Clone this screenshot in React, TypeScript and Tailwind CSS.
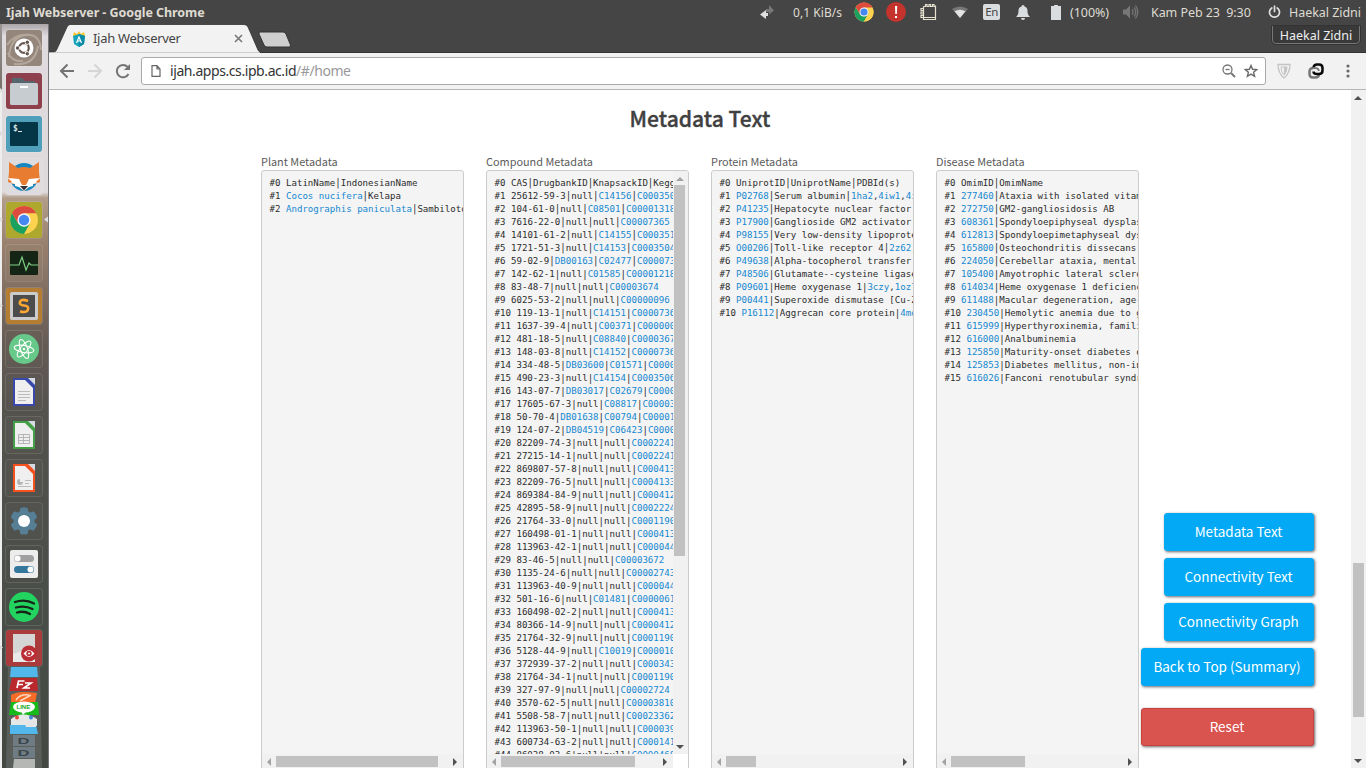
import React from "react";

const PLANTS = [
  "LatinName|IndonesianName",
  "{Cocos nucifera}|Kelapa",
  "{Andrographis paniculata}|Sambiloto",
];

const COMPOUNDS = [
  "CAS|DrugbankID|KnapsackID|KeggID",
  "25612-59-3|null|{C14156}|{C00035027}",
  "104-61-0|null|{C08501}|{C00001318}",
  "7616-22-0|null|null|{C00007365}",
  "14101-61-2|null|{C14155}|{C00035133}",
  "1721-51-3|null|{C14153}|{C00035042}",
  "59-02-9|{DB00163}|{C02477}|{C00007366}",
  "142-62-1|null|{C01585}|{C00001218}",
  "83-48-7|null|null|{C00003674}",
  "6025-53-2|null|null|{C00000096}",
  "119-13-1|null|{C14151}|{C00007364}",
  "1637-39-4|null|{C00371}|{C00000093}",
  "481-18-5|null|{C08840}|{C00003675}",
  "148-03-8|null|{C14152}|{C00007362}",
  "334-48-5|{DB03600}|{C01571}|{C00001213}",
  "490-23-3|null|{C14154}|{C00035065}",
  "143-07-7|{DB03017}|{C02679}|{C00001221}",
  "17605-67-3|null|{C08817}|{C00003658}",
  "50-70-4|{DB01638}|{C00794}|{C00001172}",
  "124-07-2|{DB04519}|{C06423}|{C00001231}",
  "82209-74-3|null|null|{C00022413}",
  "27215-14-1|null|null|{C00022415}",
  "869807-57-8|null|null|{C00041333}",
  "82209-76-5|null|null|{C00041334}",
  "869384-84-9|null|null|{C00041255}",
  "42895-58-9|null|null|{C00022242}",
  "21764-33-0|null|null|{C00011902}",
  "160498-01-1|null|null|{C00041335}",
  "113963-42-1|null|null|{C00004412}",
  "83-46-5|null|null|{C00003672}",
  "1135-24-6|null|null|{C00002743}",
  "113963-40-9|null|null|{C00004413}",
  "501-16-6|null|{C01481}|{C00000615}",
  "160498-02-2|null|null|{C00041336}",
  "80366-14-9|null|null|{C00004123}",
  "21764-32-9|null|null|{C00011903}",
  "5128-44-9|null|{C10019}|{C00001022}",
  "372939-37-2|null|null|{C00034355}",
  "21764-34-1|null|null|{C00011904}",
  "327-97-9|null|null|{C00002724}",
  "3570-62-5|null|null|{C00003810}",
  "5508-58-7|null|null|{C00023362}",
  "113963-50-1|null|null|{C00003911}",
  "600734-63-2|null|null|{C00014131}",
  "86038-03-6|null|null|{C00004682}",
];

const PROTEINS = [
  "UniprotID|UniprotName|PDBId(s)",
  "{P02768}|Serum albumin|{1ha2},{4iw1},{4iw2}",
  "{P41235}|Hepatocyte nuclear factor 4",
  "{P17900}|Ganglioside GM2 activator|",
  "{P98155}|Very low-density lipoprotein",
  "{O00206}|Toll-like receptor 4|{2z62},{2z63}",
  "{P49638}|Alpha-tocopherol transfer protein",
  "{P48506}|Glutamate--cysteine ligase",
  "{P09601}|Heme oxygenase 1|{3czy},{1ozl}",
  "{P00441}|Superoxide dismutase [Cu-Zn]",
  "{P16112}|Aggrecan core protein|{4md4}",
];

const DISEASES = [
  "OmimID|OmimName",
  "{277460}|Ataxia with isolated vitamin E",
  "{272750}|GM2-gangliosidosis AB",
  "{608361}|Spondyloepiphyseal dysplasia",
  "{612813}|Spondyloepimetaphyseal dysplasia",
  "{165800}|Osteochondritis dissecans",
  "{224050}|Cerebellar ataxia, mental",
  "{105400}|Amyotrophic lateral sclerosis",
  "{614034}|Heme oxygenase 1 deficiency",
  "{611488}|Macular degeneration, age-",
  "{230450}|Hemolytic anemia due to gamma",
  "{615999}|Hyperthyroxinemia, familial",
  "{616000}|Analbuminemia",
  "{125850}|Maturity-onset diabetes of",
  "{125853}|Diabetes mellitus, non-insulin",
  "{616026}|Fanconi renotubular syndrome",
];

function Row({ index, text }: { index: number; text: string }) {
  return (
    <div className="h-[13px]">
      #{index}{" "}
      {text.split(/(\{[^}]*\}|\|)/).map((part, i) =>
        part.startsWith("{") ? (
          <a key={i} className="text-[#1488d0]">
            {part.slice(1, -1)}
          </a>
        ) : part === "|" ? (
          <span key={i} className="inline-block scale-y-[1.2]">|</span>
        ) : (
          part
        )
      )}
    </div>
  );
}

function Arrow({ dir, className }: { dir: "up" | "down" | "left" | "right"; className: string }) {
  const d = {
    up: "M0 5L4 1L8 5Z",
    down: "M0 2L4 6L8 2Z",
    left: "M6 0L2 4L6 8Z",
    right: "M2 0L6 4L2 8Z",
  }[dir];
  return (
    <svg viewBox="0 0 8 8" className={"h-2 w-2 shrink-0 " + className}>
      <path d={d} fill="currentColor" />
    </svg>
  );
}

function Panel({
  title,
  rows,
  thumb,
  scrollY = false,
}: {
  title: string;
  rows: string[];
  thumb: string;
  scrollY?: boolean;
}) {
  return (
    <section className="flex w-[203px] shrink-0 flex-col">
      <h2 className="h-[17px] whitespace-nowrap font-['Noto_Sans_CJK_SC',sans-serif] text-[10.9px] leading-[16px] text-[#5c5c5c]">
        {title}
      </h2>
      <div className="flex h-[620px] flex-col overflow-hidden rounded-[3px] border border-[#ccc] bg-[#f4f4f4]">
        <div className="flex h-[583px] shrink-0">
          <pre className="min-w-0 flex-1 overflow-hidden pl-[7.5px] pt-[6px] font-['DejaVu_Sans_Mono',monospace] text-[9.1px] leading-[13px] text-[#2c2c2c]">
            {rows.map((r, i) => (
              <Row key={i} index={i} text={r} />
            ))}
          </pre>
          {scrollY && (
            <div className="flex w-[15px] shrink-0 flex-col items-center bg-[#f1f1f1] pr-[2px]">
              <Arrow dir="up" className="mt-[5px] text-[#a3a3a3]" />
              <div className="mt-px h-[371px] w-[11px] bg-[#c1c1c1]" />
              <div className="flex-1" />
              <Arrow dir="down" className="mb-[3px] text-[#505050]" />
            </div>
          )}
        </div>
        <div className="flex">
          <div className="flex h-[15px] flex-1 items-center bg-[#f1f1f1] pl-[3px] pr-[4px]">
            <Arrow dir="left" className="text-[#a3a3a3]" />
            <div className={"ml-[3px] h-[11px] bg-[#c1c1c1] " + thumb} />
            <div className="flex-1" />
            <Arrow dir="right" className="text-[#505050]" />
          </div>
          {scrollY && <div className="w-[15px] bg-white" />}
        </div>
      </div>
    </section>
  );
}

function ChromeLogo({ className }: { className: string }) {
  return (
    <svg viewBox="0 0 48 48" className={className}>
      <circle cx="24" cy="24" r="23" fill="#fdd24f" />
      <path d="M4.1 12.5A23 23 0 0 0 24 47L34 29L24 34.5L14.5 29.5Z" fill="#1aa15f" />
      <path d="M24 13H44.2A23 23 0 0 1 24 47L34 29Z" fill="#fdd24f" />
      <path d="M4.1 12.5A23 23 0 0 1 44.2 13H24L14 29Z" fill="#dd4b3e" />
      <circle cx="24" cy="24" r="11" fill="#f4f4f4" />
      <circle cx="24" cy="24" r="8.6" fill="#4688f1" />
    </svg>
  );
}

function TopBar() {
  return (
    <header className="flex h-6 shrink-0 items-center whitespace-nowrap bg-[#454545] pl-[6px] font-['Noto_Sans',sans-serif] text-[12.5px] text-[#dfdbd2]">
      <div className="w-[753px] pt-[2px] text-[12.5px] font-bold">
        <span className="tracking-[-0.07px]">Ijah Webserver - Google Chrome</span>
      </div>
      <div className="w-[34px]">
        <svg viewBox="0 0 16 16" className="h-4 w-4">
          <path d="M7 5h3V1l5 5.500-5 4V8H7Z" fill="#777" />
          <path d="M9 9H7V6L1 10.500 7 15v-3h2Z" fill="#dfdfdf" />
        </svg>
      </div>
      <div className="w-[61px] pt-[2px]"><span className="tracking-[0.05px] text-[12px]">0,1 KiB/s</span></div>
      <div className="w-[32px]"><ChromeLogo className="h-5 w-5" /></div>
      <div className="w-[34px]">
        <svg viewBox="0 0 20 20" className="h-5 w-5">
          <circle cx="10" cy="10" r="10" fill="#c4342c" />
          <path d="M9 4h2.200l-.3 8H9.300ZM9 14h2v2H9Z" fill="#fff" />
        </svg>
      </div>
      <div className="w-[32px]">
        <svg viewBox="0 0 17 18" className="h-[18px] w-[17px]" fill="none" stroke="#e6e2cf" strokeWidth="1.200">
          <path d="M3.500 3.500V16.500H15.500V2.500M3.500 14.500h12M3.500 3.500h2V1.500h1.500v2h2V1.500h1.500v2h2V1.500h1.500v2h1M3.500 5.500H1v2h2.500M3.500 9H1v2h2.500M3.500 12.500H1v2h2.500" />
        </svg>
      </div>
      <div className="w-[31px]">
        <svg viewBox="0 0 16 14" className="h-[14px] w-4">
          <path d="M0 4Q8-1 16 4L8 13Z" fill="#777" />
          <path d="M2.500 6.300Q8 3 13.500 6.300L8 13Z" fill="#e3e3e3" />
        </svg>
      </div>
      <div className="flex w-[33px]">
        <span className="flex h-4 w-[17px] items-center justify-center rounded-[2px] bg-[#d9dde0] text-[11.5px] leading-none tracking-[-0.4px] text-[#454545]">En</span>
      </div>
      <div className="w-[35px]">
        <svg viewBox="0 0 14 15" className="h-[15px] w-[14px]" fill="#d9dde0">
          <path d="M7 0a1.500 1.500 0 0 1 1.500 1.500C11 2.200 11.500 4 11.500 6c0 3 .8 4.500 2.500 6H0c1.700-1.500 2.500-3 2.500-6 0-2 .5-3.800 3-4.500A1.500 1.500 0 0 1 7 0ZM5 13h4a2 2 0 0 1-4 0Z" />
        </svg>
      </div>
      <div className="w-[19px]">
        <svg viewBox="0 0 10 15" className="h-[15px] w-[10px]" fill="#d9dde0"><path d="M3 0h4v1h3v14H0V1h3Z" /></svg>
      </div>
      <div className="w-[53px] pt-[2px]"><span className="tracking-[-0.05px]">(100%)</span></div>
      <div className="w-[28px]">
        <svg viewBox="0 0 16 16" className="h-4 w-4" fill="none" stroke="#777" strokeWidth="1.300">
          <path d="M0 5.500h3l4-4v13l-4-4H0Z" fill="#777" stroke="none" />
          <path d="M9 5.500q2 2.500 0 5M11 3.500q3.500 4.500 0 9M12.500 1.500q4.500 6.500 0 13" />
        </svg>
      </div>
      <div className="w-[117px] whitespace-pre pt-[2px]"><span className="tracking-[-0.07px]">Kam Peb 23  9:30</span></div>
      <div className="w-[21px]">
        <svg viewBox="0 0 13 14" className="h-[14px] w-[13px]" fill="none" stroke="#dfdfdf" strokeWidth="1.700" strokeLinecap="round">
          <path d="M6.500 1v5.500M3.800 3A5 5 0 1 0 9.200 3" />
        </svg>
      </div>
      <div className="pt-[2px]"><span className="tracking-[-0.05px]">Haekal Zidni</span></div>
    </header>
  );
}

function BrowserChrome() {
  return (
    <div className="shrink-0 font-['Noto_Sans',sans-serif]">
      <div className="flex h-[29px] border-b border-[#353535] bg-[#454545]">
        <div className="relative h-[29px] w-[211px] shrink-0">
          <svg viewBox="0 0 211 29" className="absolute inset-0 h-[29px] w-[211px]">
            <path d="M0 29V28H5Q7 28 8 25L18 3Q19 .5 21 .5H195Q198 .5 199 3L209 26Q210 28 211 28V29Z" fill="#f2f2f2" stroke="#333" strokeWidth=".8" />
            <path d="M5 28.500H211V29.500H0V28.500Z" fill="#f2f2f2" />
          </svg>
          <div className="relative flex h-full items-center pl-[23px] pr-[17px]">
            <svg viewBox="0 0 14 16" className="h-4 w-[14px]">
              <path d="M1 5L2 1l3 2 2-3 2 3 3-2 1 4Z" fill="#fbc52d" />
              <path d="M1 5l6-2 6 2-1 8-5 3-5-3Z" fill="#14a5bd" />
              <path d="M7 3l6 2-1 8-5 3Z" fill="#0b8ba5" />
              <path d="M4.500 12L7 6l2.500 6M5.500 10h3" stroke="#fff" fill="none" strokeWidth="1.200" />
            </svg>
            <span className="ml-[7px] text-[13px] tracking-[-0.3px] text-[#444]">Ijah Webserver</span>
            <svg viewBox="0 0 9 9" className="ml-auto h-[9px] w-[9px]"><path d="M1 1l7 7M8 1L1 8" stroke="#777" strokeWidth="1.600" /></svg>
          </div>
        </div>
        <svg viewBox="0 0 34 17" className="-ml-[2px] mt-[7px] h-[17px] w-[34px]">
          <path d="M2 1H25Q27 1 28 3L32.500 14Q33 16 31 16H9Q7 16 6 14L1 3Q.5 1 2 1Z" fill="#cfcfcf" stroke="#333" strokeWidth="1" />
        </svg>
        <div className="ml-auto mr-[6px] mt-[2px] flex h-[18px] w-[88px] items-center justify-center whitespace-nowrap rounded-b-[4px] border border-t-0 border-[#777] bg-[#393939] pt-[3px] text-[12.5px] tracking-[0px] text-[#eee] outline outline-1 outline-[#333]">
          Haekal Zidni
        </div>
      </div>
      <div className="flex h-[37px] items-center border-b border-[#b6b6b6] bg-[#f2f2f2]">
        <svg viewBox="0 0 16 16" className="ml-[10px] h-4 w-4" fill="none" stroke="#737373" strokeWidth="2"><path d="M15 8H2M8.500 1.500L2 8l6.500 6.500" /></svg>
        <svg viewBox="0 0 16 16" className="ml-[12px] h-4 w-4" fill="none" stroke="#d5d5d5" strokeWidth="2"><path d="M1 8h13M7.500 1.500L14 8l-6.500 6.500" /></svg>
        <svg viewBox="0 0 16 16" className="ml-[12px] h-4 w-4" fill="none" stroke="#737373" strokeWidth="2"><path d="M13.500 11A6.200 6.200 0 1 1 12.500 3.800" /><path d="M15 1v6H9Z" fill="#737373" stroke="none" /></svg>
        <div className="ml-[10px] flex h-[28px] w-[1125px] shrink-0 items-center rounded-[3px] border border-[#a9a9a9] bg-white px-[9px]">
          <svg viewBox="0 0 10 12" className="h-3 w-[10px]" fill="none" stroke="#666" strokeWidth="1.200"><path d="M1 .7H6L9 4v7.300H1ZM6 .7V4h3" /></svg>
          <span className="ml-[9px] pb-px text-[14px] tracking-[-0.42px] text-[#333]">ijah.apps.cs.ipb.ac.id<span className="tracking-[-0.45px] text-[#999]">/#/home</span></span>
          <svg viewBox="0 0 14 14" className="ml-auto h-[14px] w-[14px]" fill="none" stroke="#757575" strokeWidth="1.300"><circle cx="5.500" cy="5.500" r="4.500" /><path d="M3.500 5.500h4" /><path d="M9 9l4 4" strokeWidth="2" /></svg>
          <svg viewBox="0 0 14 14" className="ml-[8px] mr-[-2px] h-[14px] w-[14px]" fill="none" stroke="#6a6a6a" strokeWidth="1.400"><path d="M7 1.500l1.600 3.800 4.100.3-3.100 2.700 1 4L7 10.100l-3.600 2.200 1-4L1.300 5.600l4.100-.3Z" /></svg>
        </div>
        <svg viewBox="0 0 14 16" className="ml-[11px] h-4 w-[14px]" fill="none" stroke="#c4c4c4"><path d="M1 1.500h12Q13 10 7 15Q1 10 1 1.500Z" strokeWidth="1.300" /><path d="M4 4h6Q10 9 7 12Q4 9 4 4Z" strokeWidth="1" /><path d="M7 4h3Q10 9 7 12Z" fill="#c4c4c4" stroke="none" /></svg>
        <svg viewBox="0 0 16 16" className="ml-[17px] h-4 w-4" fill="none" strokeWidth="2.500">
          <path d="M5.500 5Q1.500 5 1.500 8.500V11Q1.500 14.500 5 14.500H7.500Q11 14.500 11 11" stroke="#777" />
          <path d="M5.500 4.500Q6 1.500 9 1.500H11Q14.500 1.500 14.500 5V7.500Q14.500 11 11 11H9Q5.500 11 5.500 8.500" stroke="#0a0a0a" />
          <path d="M5 5.200H8Q10.500 5.200 10.800 8" stroke="#777" strokeWidth="1.800" />
        </svg>
        <svg viewBox="0 0 4 14" className="ml-[22px] h-[14px] w-1" fill="#6a6a6a"><circle cx="2" cy="2" r="1.600" /><circle cx="2" cy="7" r="1.600" /><circle cx="2" cy="12" r="1.600" /></svg>
      </div>
    </div>
  );
}

function Doc({ color, children }: { color: string; children: React.ReactNode }) {
  return (
    <>
      <path d="M8 5H28V31H8Z" fill="#efefef" stroke={color} strokeWidth="2" />
      <path d="M18 5h10v10Z" fill={color} />
      <path d="M22 4h7v7Z" fill="#d6dae2" />
      {children}
    </>
  );
}

function Tile({ tone, children }: { tone: string; children: React.ReactNode }) {
  return (
    <div className={"h-9 w-9 shrink-0 rounded-[3px] shadow-[0_0_0_1px_rgba(255,255,255,0.12)] " + tone}>
      <svg viewBox="0 0 36 36" className="h-9 w-9">{children}</svg>
    </div>
  );
}

function Launcher() {
  return (
    <nav className="relative flex w-[49px] shrink-0 flex-col items-center gap-[7px] overflow-hidden border-r border-[#77757c] bg-[linear-gradient(180deg,#aaa6a8_0px,#dedadd_12px,#dedadc_168px,#b29d8a_174px,#967e6b_225px,#7b6a5f_280px,#655b55_320px,#55534e_380px,#4c4f4a_520px,#434942_744px)] pt-[6px]">
      <div className="absolute bottom-0 left-0 top-0 w-[2px] bg-[linear-gradient(180deg,#9a9694_0px,#77706a_66px,#eeeeee_68px,#eeeeee_744px)]" />
      <Tile tone="bg-[#94867b]">
        <path d="M3 27Q4 8 19 5Q34 3 35 20M1 15Q9 3 23 5M8 34Q29 36 32 16M2 23Q6 32 17 31" stroke="#b3a79b" strokeWidth="2" fill="none" />
        <circle cx="18" cy="18" r="9.500" fill="#fff" />
        <circle cx="18" cy="18" r="4.800" fill="none" stroke="#65574f" strokeWidth="2.200" />
        <path d="M11 18h4M20 14.500l2-3.500M20 21.500l2 3.500" stroke="#fff" strokeWidth="3" />
        <circle cx="11.500" cy="18" r="1.700" fill="#65574f" /><circle cx="21.300" cy="12.300" r="1.700" fill="#65574f" /><circle cx="21.300" cy="23.700" r="1.700" fill="#65574f" />
      </Tile>
      <Tile tone="bg-[#8e414d]">
        <path d="M6 5h10l3 3h10v6H6Z" fill="#56666e" /><rect x="4" y="10" width="28" height="22" rx="1.500" fill="#c6cccf" /><rect x="14" y="13" width="8" height="2" fill="#fff" />
      </Tile>
      <Tile tone="bg-[#4f9fba]">
        <rect x="4" y="6" width="28" height="24" rx="1" fill="#053647" />
        <text x="7" y="15" fill="#d9e5e8" fontSize="8" fontFamily="DejaVu Sans Mono" fontWeight="bold">$</text><path d="M12 15.500h4" stroke="#d9e5e8" />
      </Tile>
      <Tile tone="bg-[#dfdcdf]">
        <circle cx="18" cy="18" r="14" fill="#1787c0" />
        <path d="M3 3l9 6Q18 7 24 9l9-6v10l1 10-9 3-7 6-7-6-9-3 1-10Z" fill="#e87d32" />
        <path d="M2 19l11 1 3 6h4l3-6 11-1-4 4 1 1-4 1v2l-4 1-5 4-5-4-4-1v-2l-4-1 1-1Z" fill="#fff" />
        <path d="M14 27h8l-4 4.500Z" fill="#343434" />
      </Tile>
      <Tile tone="bg-[#afa82f]">
        <g transform="translate(3.500 3.500) scale(.605)">
          <circle cx="24" cy="24" r="23" fill="#fdd24f" />
          <path d="M4.100 12.500A23 23 0 0 0 24 47L34 29L24 34L14 29Z" fill="#1aa15f" />
          <path d="M4.100 12.500A23 23 0 0 1 44.200 13H24L14 29Z" fill="#dd4b3e" />
          <circle cx="24" cy="24" r="11" fill="#f4f4f4" /><circle cx="24" cy="24" r="8.600" fill="#4688f1" />
        </g>
      </Tile>
      <Tile tone="bg-[#94847355]">
        <rect x="4" y="6" width="28" height="24" rx="1" fill="#142516" /><path d="M4 20h9l3-8 4 13 3-7 2 2h7" fill="none" stroke="#80ce83" strokeWidth="1.200" />
      </Tile>
      <Tile tone="bg-[#b57d31]">
        <rect x="4" y="4" width="28" height="28" rx="2" fill="#cbcbcb" /><rect x="7" y="7" width="22" height="22" fill="#4c4c4c" />
        <path d="M22 13q-7-2.500-8 .8t4 3.700 4 4-8 2" fill="none" stroke="#ffa733" strokeWidth="2.600" />
      </Tile>
      <Tile tone="bg-[#655d5744]">
        <circle cx="18" cy="18" r="15" fill="#66c989" />
        <g fill="none" stroke="#fff" strokeWidth="1.100"><ellipse cx="18" cy="18" rx="3.500" ry="10" transform="rotate(-20 18 18)" /><ellipse cx="18" cy="18" rx="3.500" ry="10" transform="rotate(40 18 18)" /><ellipse cx="18" cy="18" rx="3.500" ry="10" transform="rotate(100 18 18)" /></g><circle cx="18" cy="18" r="1.300" fill="#fff" />
      </Tile>
      <Tile tone="bg-[#5d5a5644]"><Doc color="#3949ab"><path d="M12 17.500h12M12 20.500h12M12 23.500h12M12 26.500h8" stroke="#bcbcbc" /></Doc></Tile>
      <Tile tone="bg-[#5d5a5644]"><Doc color="#43a047"><path d="M12.500 17.500h11v9H12.500ZM12.500 20.500h11M12.500 23.500h11M17.500 17.500v9" fill="none" stroke="#b5b5b5" /></Doc></Tile>
      <Tile tone="bg-[#5d5a5644]"><Doc color="#f4511e"><path d="M19 20.500h6M19 23.500h4M12 26.500h13" stroke="#bcbcbc" /><path d="M14 19a3 3 0 1 0 3 3h-3Z" fill="#b5b5b5" /></Doc></Tile>
      <Tile tone="bg-[#5d5a5644]">
        <g fill="#567f95"><circle cx="18" cy="18" r="10.500" /><rect x="14" y="4.500" width="8" height="27" rx="2" /><rect x="14" y="4.500" width="8" height="27" rx="2" transform="rotate(60 18 18)" /><rect x="14" y="4.500" width="8" height="27" rx="2" transform="rotate(120 18 18)" /></g><circle cx="18" cy="18" r="6" fill="#fff" />
      </Tile>
      <Tile tone="bg-[#4d504b66]">
        <rect x="4" y="4" width="28" height="28" rx="2" fill="#ededed" /><rect x="8" y="9" width="20" height="7" rx="3.500" fill="#a0a0a0" /><circle cx="11.500" cy="12.500" r="3" fill="#fff" /><rect x="8" y="20" width="20" height="7" rx="3.500" fill="#33789c" /><circle cx="24.500" cy="23.500" r="3" fill="#fff" />
      </Tile>
      <Tile tone="bg-[#494e4866]">
        <circle cx="18" cy="18" r="15" fill="#22d45f" /><path d="M9 13q10-3.500 19 1.500M10 18.500q9-2.500 16.500 1.500M11 23.500q7-2 13 1.500" fill="none" stroke="#172519" strokeWidth="2.300" strokeLinecap="round" />
      </Tile>
      <div className="mt-[-2px] flex shrink-0 flex-col">
        <Tile tone="bg-[#a93b3c]">
          <path d="M7 4h22v28H7Z" fill="#e9e9e9" /><path d="M7 4h22v12L7 24Z" fill="#d5d5d5" /><circle cx="23" cy="23.500" r="8" fill="#bb2d34" /><path d="M17.500 23.500q5.500-7 11 0q-5.500 7-11 0Z" fill="#fff" /><circle cx="23" cy="23.500" r="2.700" fill="#bb2d34" /><circle cx="23" cy="23.500" r="1" fill="#fff" />
        </Tile>
        <svg viewBox="0 0 36 102" className="h-[102px] w-9">
          <path d="M2 0h32l2 102H0Z" fill="#595e5b" />
          <path d="M5 1h26l1 10H4Z" fill="#52b7eb" />
          <path d="M6 12h25l1 13H3Z" fill="#b9282d" />
          <path d="M11 22l1.500-7h6M12 18.500h5M19 17h6l-7 5h6" fill="none" stroke="#fff" strokeWidth="1.700" />
          <path d="M5 29Q12 24 31 27L29 37H5Z" fill="#f66b28" /><path d="M10 34q4-6 13-5M14 35l11-6" fill="none" stroke="#fcd6bb" strokeWidth="1.500" />
          <path d="M5 36h27l1 13H3Z" fill="#18b91b" /><ellipse cx="18" cy="41" rx="11" ry="5.500" fill="#fff" /><path d="M15 45h6l-4 4Z" fill="#fff" />
          <text x="10.500" y="43" fill="#18a91b" fontSize="6" fontFamily="Liberation Sans" fontWeight="bold">LINE</text>
          <path d="M5 53Q17 44 31 53v7H5Z" fill="#e6e8e8" /><circle cx="11" cy="51.500" r="2" fill="#e64a3a" /><circle cx="25" cy="51.500" r="2" fill="#4284d4" />
          <path d="M4 59h26l2 9H4Z" fill="#52b7eb" /><path d="M18 55h12v6H20Z" fill="#e5e5e5" />
          <path d="M7 69h22v11H7ZM7 81h22v11H7Z" fill="#707c84" />
          <text x="11.500" y="77.500" fill="#3c454b" fontSize="8.500" textLength="12" lengthAdjust="spacingAndGlyphs" fontWeight="bold" fontFamily="Liberation Sans">D</text>
          <text x="11.500" y="89.500" fill="#3c454b" fontSize="8.500" textLength="12" lengthAdjust="spacingAndGlyphs" fontWeight="bold" fontFamily="Liberation Sans">D</text>
          <path d="M8 93h21v9H7Z" fill="#b5b7b5" />
        </svg>
      </div>
      <svg viewBox="0 0 49 744" className="absolute inset-0 h-[744px] w-[49px]" fill="#ddd">
        <path d="M0 64l3 2.500-3 2.500ZM0 107l3 2.500-3 2.500ZM0 193l3 2.500-3 2.500ZM48 192.500l-4 3 4 3ZM0 279l3 2.500-3 2.500ZM0 621l3 2.500-3 2.500Z" />
      </svg>
    </nav>
  );
}

const BUTTON =
  "flex h-[38px] items-center justify-center rounded-[3px] border pr-[1px] font-['Noto_Sans_CJK_SC',sans-serif] text-[13.5px] leading-none text-white shadow-[1px_1px_3px_rgba(0,0,0,0.6)] ";

function ActionButtons() {
  return (
    <div className="absolute right-[52px] top-[423px] flex flex-col items-end gap-[7px]">
      <button className={BUTTON + "w-[150px] border-[#03a9f4] bg-[#03a9f4]"}>Metadata Text</button>
      <button className={BUTTON + "w-[150px] border-[#03a9f4] bg-[#03a9f4]"}>Connectivity Text</button>
      <button className={BUTTON + "w-[150px] border-[#03a9f4] bg-[#03a9f4]"}>Connectivity Graph</button>
      <button className={BUTTON + "w-[173px] border-[#03a9f4] bg-[#03a9f4]"}>Back to Top (Summary)</button>
      <button className={BUTTON + "mt-[15px] w-[173px] border-[#c9413d] bg-[#d9534f]"}>Reset</button>
    </div>
  );
}

export default function App() {
  return (
    <div className="flex h-[768px] w-[1366px] flex-col overflow-hidden bg-white">
      <TopBar />
      <div className="flex min-h-0 flex-1">
        <Launcher />
        <div className="flex min-w-0 flex-1 flex-col">
          <BrowserChrome />
          <div className="relative flex min-h-0 flex-1">
            <main className="flex flex-1 flex-col items-center overflow-hidden bg-white">
              <h1 className="mt-[9px] h-[38px] shrink-0 font-['Noto_Sans_CJK_SC',sans-serif] text-[21.1px] font-medium leading-[38px] text-[#404040] [-webkit-text-stroke:0.35px_#404040]">Metadata Text</h1>
              <div className="mt-[16px] flex gap-[22px]">
                <Panel title="Plant Metadata" rows={PLANTS} thumb="w-[162px]" />
                <Panel title="Compound Metadata" rows={COMPOUNDS} thumb="w-[134px]" scrollY />
                <Panel title="Protein Metadata" rows={PROTEINS} thumb="w-[30px]" />
                <Panel title="Disease Metadata" rows={DISEASES} thumb="w-[74px]" />
              </div>
            </main>
            <aside className="flex w-[15px] shrink-0 flex-col items-center bg-[#f1f1f1] pr-px">
              <Arrow dir="up" className="mt-[5px] text-[#505050]" />
              <div className="mt-[460px] h-[154px] w-[11px] bg-[#c1c1c1]" />
              <div className="flex-1" />
              <Arrow dir="down" className="mb-[3px] text-[#505050]" />
            </aside>
            <ActionButtons />
          </div>
        </div>
      </div>
    </div>
  );
}
